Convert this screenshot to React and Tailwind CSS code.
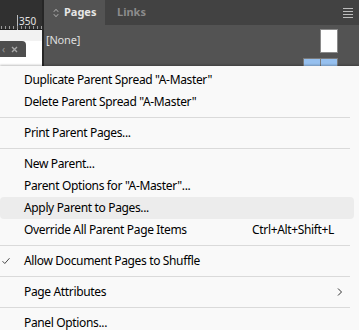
import React from "react";

const Separator = () => (
  <div className="h-[9px] flex items-center pr-[9px]">
    <div className="h-px w-full bg-[#dadada]" />
  </div>
);

const Item = ({ label, shortcut, checked, submenu, active }) => (
  <div
    className={
      "h-[22px] flex items-center pl-[24px] pr-[20px] mr-[5px] relative rounded-[4px] " +
      (active ? "bg-[#ececec]" : "")
    }
  >
    {checked && (
      <svg className="absolute left-[2px] top-[7px]" width="8" height="8" viewBox="0 0 8 8">
        <path d="M0.5 4.2 L2.8 6.5 L7.5 1.2" fill="none" stroke="#333" strokeWidth="0.9" />
      </svg>
    )}
    <span className="flex-1 whitespace-nowrap">{label}</span>
    {shortcut && <span className="whitespace-nowrap">{shortcut}</span>}
    {submenu && (
      <svg className="mr-[-10px]" width="8" height="10" viewBox="0 0 8 10">
        <path d="M2 1.5 L5.5 5 L2 8.5" fill="none" stroke="#333" strokeWidth="1" />
      </svg>
    )}
  </div>
);

const Ruler = () => (
  <div className="h-[30px] bg-[#303030] relative border-b border-[#1e1e1e]">
    <div className="absolute left-[17px] top-[15px] h-[15px] w-px bg-[#bdbdbd]" />
    <span className="absolute left-[19px] top-[15px] text-[10px] leading-[12px] text-[#e4e4e4]">350</span>
    <div className="absolute left-0 right-0 bottom-0 h-[3px] flex gap-[3px] pl-[1px]">
      {Array.from({ length: 11 }).map((_, i) => (
        <div key={i} className="w-px h-full bg-[#9a9a9a]" />
      ))}
    </div>
  </div>
);

export default function App() {
  return (
    <div
      className="w-[359px] h-[330px] relative overflow-hidden bg-[#535353]"
      style={{ fontFamily: '"Noto Sans", "Open Sans", sans-serif' }}
    >
      <div className="flex h-full">
        <div className="w-[42px] flex flex-col bg-[#ffffff]">
          <Ruler />
          <div className="h-[11px] bg-[#f2f2f2]" />
          <div className="w-[26px] h-[16px] bg-[#4e4e4e] rounded-tr-[4px] flex items-center gap-[6px] pl-[2px]">
            <span className="text-[#9a9a9a] text-[10px] leading-none">‹</span>
            <svg width="7" height="7" viewBox="0 0 7 7">
              <path d="M1 1 L6 6 M6 1 L1 6" stroke="#a8a8a8" strokeWidth="1.4" />
            </svg>
          </div>
        </div>
        <div className="w-[2px] bg-[#262626]" />
        <div className="flex-1 flex flex-col">
          <div className="h-[25px] bg-[#424242] flex items-stretch">
            <div className="w-[61px] bg-[#535353] flex items-center gap-[5px] pl-[9px]">
              <svg width="6" height="10" viewBox="0 0 6 10">
                <path d="M0.8 3.8 L3 1.3 L5.2 3.8 M0.8 6.2 L3 8.7 L5.2 6.2" fill="none" stroke="#bdbdbd" strokeWidth="0.9" />
              </svg>
              <span className="text-[11px] font-bold text-[#e6e6e6]">Pages</span>
            </div>
            <div className="pl-[12px] flex items-center">
              <span className="text-[11px] font-bold text-[#8c8c8c]">Links</span>
            </div>
            <div className="flex-1" />
            <div className="pr-[6px] pt-[8px] flex flex-col gap-[2px]">
              <div className="w-[10px] h-px bg-[#bdbdbd]" />
              <div className="w-[10px] h-px bg-[#bdbdbd]" />
              <div className="w-[10px] h-px bg-[#bdbdbd]" />
              <div className="w-[10px] h-px bg-[#bdbdbd]" />
            </div>
          </div>
          <div className="flex-1 flex justify-between pl-[2px] pr-[21px]">
            <span className="text-[11px] leading-[14px] pt-[8px] text-[#dedede] tracking-[-0.2px]">[None]</span>
            <div className="flex flex-col items-end pt-[4px]">
              <div className="w-[18px] h-[24px] bg-white border border-[#8a8a8a]" />
              <div className="flex mt-[5px]">
                <div className="w-[18px] h-[14px] bg-[#96c0ef] border border-[#7a7a7a]" />
                <div className="w-[17px] h-[14px] bg-[#96c0ef] border border-[#7a7a7a] border-l-0" />
              </div>
            </div>
          </div>
        </div>
      </div>

      <div className="absolute left-0 top-[66px] right-0 bottom-0 bg-[#f9f9f9] pt-[3px] text-[12px] tracking-[-0.35px] text-black shadow-[0_-1px_2px_rgba(0,0,0,0.25)]">
        <Item label={'Duplicate Parent Spread "A-Master"'} />
        <Item label={'Delete Parent Spread "A-Master"'} />
        <Separator />
        <Item label="Print Parent Pages..." />
        <Separator />
        <Item label="New Parent..." />
        <Item label={'Parent Options for "A-Master"...'} />
        <Item label="Apply Parent to Pages..." active />
        <Item label="Override All Parent Page Items" shortcut="Ctrl+Alt+Shift+L" />
        <Separator />
        <Item label="Allow Document Pages to Shuffle" checked />
        <Separator />
        <Item label="Page Attributes" submenu />
        <Separator />
        <Item label="Panel Options..." />
      </div>
    </div>
  );
}
